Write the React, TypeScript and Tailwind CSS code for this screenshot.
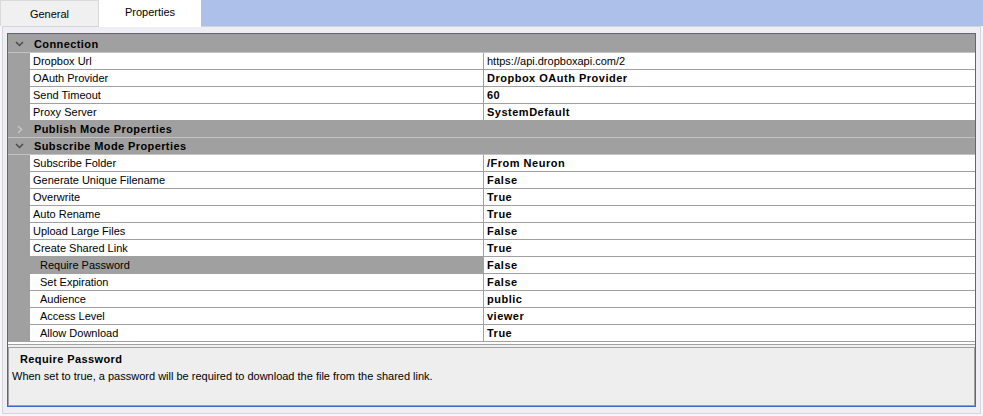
const font = { fontFamily: '"Liberation Sans", Arial, sans-serif' }

type Item =
  | { kind: "cat"; label: string; open: boolean }
  | { kind: "prop"; name: string; value: string; bold?: boolean; nested?: boolean; selected?: boolean }

const items: Item[] = [
  { kind: "cat", label: "Connection", open: true },
  { kind: "prop", name: "Dropbox Url", value: "https://api.dropboxapi.com/2" },
  { kind: "prop", name: "OAuth Provider", value: "Dropbox OAuth Provider", bold: true },
  { kind: "prop", name: "Send Timeout", value: "60", bold: true },
  { kind: "prop", name: "Proxy Server", value: "SystemDefault", bold: true },
  { kind: "cat", label: "Publish Mode Properties", open: false },
  { kind: "cat", label: "Subscribe Mode Properties", open: true },
  { kind: "prop", name: "Subscribe Folder", value: "/From Neuron", bold: true },
  { kind: "prop", name: "Generate Unique Filename", value: "False", bold: true },
  { kind: "prop", name: "Overwrite", value: "True", bold: true },
  { kind: "prop", name: "Auto Rename", value: "True", bold: true },
  { kind: "prop", name: "Upload Large Files", value: "False", bold: true },
  { kind: "prop", name: "Create Shared Link", value: "True", bold: true },
  { kind: "prop", name: "Require Password", value: "False", bold: true, nested: true, selected: true },
  { kind: "prop", name: "Set Expiration", value: "False", bold: true, nested: true },
  { kind: "prop", name: "Audience", value: "public", bold: true, nested: true },
  { kind: "prop", name: "Access Level", value: "viewer", bold: true, nested: true },
  { kind: "prop", name: "Allow Download", value: "True", bold: true, nested: true },
]

function Chevron({ open }: { open: boolean }) {
  return open ? (
    <svg width="9" height="6" viewBox="0 0 9 6" className="text-[#4a4a4a]">
      <path d="M1 1l3.5 3.5L8 1" fill="none" stroke="currentColor" strokeWidth="1.5" />
    </svg>
  ) : (
    <svg width="6" height="9" viewBox="0 0 6 9" className="text-[#c4c4c4]">
      <path d="M1 1l3.5 3.5L1 8" fill="none" stroke="currentColor" strokeWidth="1.6" />
    </svg>
  )
}

function Row({ item }: { item: Item }) {
  if (item.kind === "cat") {
    return (
      <div className="flex h-[17px] items-center border-b border-[#c4c4c4] bg-[#a0a0a0]">
        <div className="flex w-[22px] justify-center pl-[1px]">
          <Chevron open={item.open} />
        </div>
        <span className="ml-[4px] text-[11px] font-bold tracking-[0.4px] text-black">{item.label}</span>
      </div>
    )
  }
  return (
    <div className="flex h-[17px]">
      <div className="w-[22px] shrink-0 bg-[#a0a0a0]" />
      <div className="flex flex-1 border-b border-[#a0a0a0]">
        <div
          className={`flex w-[454px] shrink-0 items-center border-r border-[#a0a0a0] text-[11px] text-black ${
            item.nested ? "pl-[10px]" : "pl-[3px]"
          } ${item.selected ? "bg-[#a0a0a0]" : "bg-white"}`}
        >
          {item.name}
        </div>
        <div
          className={`flex flex-1 items-center bg-white pl-[3px] text-[11px] text-black ${
            item.bold ? "font-bold tracking-[0.5px]" : ""
          }`}
        >
          {item.value}
        </div>
      </div>
    </div>
  )
}

export default function App() {
  return (
    <div className="h-[416px] w-[983px] overflow-hidden bg-[#f7f7f7]" style={font}>
      <div className="flex h-[26px]">
        <div className="flex h-[26px] w-[99px] items-center justify-center border border-b-0 border-[#dadada] bg-[#f0f0f0] pt-[1px] text-[11px] text-black">
          General
        </div>
        <div className="relative z-10 flex h-[27px] w-[102px] items-center justify-center bg-white pb-[3px] text-[11px] text-black">
          Properties
        </div>
        <div className="h-[26px] flex-1 bg-[#adc0e9]" />
      </div>

      <div className="ml-[2px] h-[388px] w-[979px] border border-[#d4d4dc] bg-[#eeeef4] px-[4px] pt-[6px]">
        <div className="flex h-[374px] w-[969px] flex-col border border-[#3f66cc] bg-[#f0f0f0]">
          <div className="h-[311px] border-b border-[#a0a0a0] bg-white">
            <div className="h-[2px] bg-[#a0a0a0]" />
            {items.map((item, i) => (
              <Row key={i} item={item} />
            ))}
          </div>
          <div className="mt-[2px] h-[59px] border border-[#a0a0a0] bg-[#eeeeee] text-[11px] text-black">
            <p className="pl-[11px] pt-[4px] font-bold leading-[15px] tracking-[0.4px]">Require Password</p>
            <p className="pl-[3px] pt-[2px] leading-[15px]">
              When set to true, a password will be required to download the file from the shared link.
            </p>
          </div>
        </div>
      </div>
    </div>
  )
}
